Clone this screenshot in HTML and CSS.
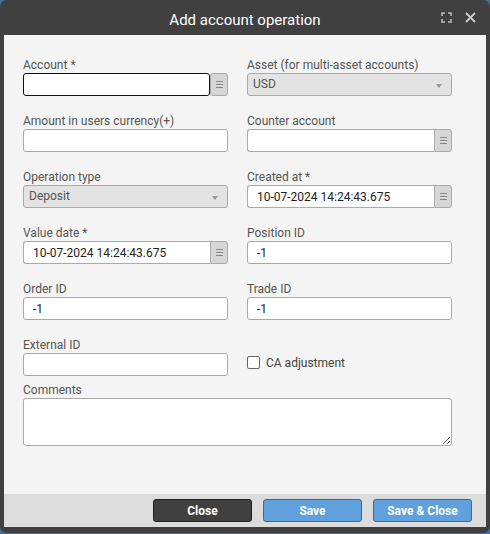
FILE: index.html
```html
<!DOCTYPE html>
<html lang="en">
<head>
    <meta charset="UTF-8">
    <meta name="viewport" content="width=device-width, initial-scale=1.0">
    <title>Add account operation</title>
    <link rel="stylesheet" href="styles.css">
</head>
<body>
    <div class="window">
        <div class="titlebar">
            <span class="title">Add account operation</span>
            <div class="tools">
                <svg width="11" height="11" viewBox="0 0 11 11" fill="none" stroke="#bbb" stroke-width="1.6">
                    <path d="M1 4V1h3M7 1h3v3M10 7v3H7M4 10H1V7"/>
                </svg>
                <svg width="11" height="11" viewBox="0 0 11 11" fill="none" stroke="#ccc" stroke-width="1.8">
                    <path d="M1 1l9 9M10 1l-9 9"/>
                </svg>
            </div>
        </div>
        <div class="content">
            <div class="grid">
                <div class="field">
                    <label>Account *</label>
                    <div class="combo focused">
                        <input type="text" value="">
                        <span class="trigger"><i></i><i></i><i></i></span>
                    </div>
                </div>
                <div class="field">
                    <label>Asset (for multi-asset accounts)</label>
                    <div class="select">USD<span class="arrow"></span></div>
                </div>

                <div class="field">
                    <label>Amount in users currency(+)</label>
                    <input class="text" type="text" value="">
                </div>
                <div class="field">
                    <label>Counter account</label>
                    <div class="combo">
                        <input type="text" value="">
                        <span class="trigger"><i></i><i></i><i></i></span>
                    </div>
                </div>

                <div class="field">
                    <label>Operation type</label>
                    <div class="select">Deposit<span class="arrow"></span></div>
                </div>
                <div class="field">
                    <label>Created at *</label>
                    <div class="combo">
                        <input class="date" type="text" value="10-07-2024 14:24:43.675">
                        <span class="trigger"><i></i><i></i><i></i></span>
                    </div>
                </div>

                <div class="field">
                    <label>Value date *</label>
                    <div class="combo">
                        <input class="date" type="text" value="10-07-2024 14:24:43.675">
                        <span class="trigger"><i></i><i></i><i></i></span>
                    </div>
                </div>
                <div class="field">
                    <label>Position ID</label>
                    <input class="text" type="text" value="-1">
                </div>

                <div class="field">
                    <label>Order ID</label>
                    <input class="text" type="text" value="-1">
                </div>
                <div class="field">
                    <label>Trade ID</label>
                    <input class="text" type="text" value="-1">
                </div>

                <div class="field">
                    <label>External ID</label>
                    <input class="text" type="text" value="">
                </div>
                <div class="field check-field">
                    <span class="checkbox"></span>
                    <span>CA adjustment</span>
                </div>
            </div>
            <div class="comments">
                <label>Comments</label>
                <textarea></textarea>
            </div>
        </div>
        <div class="footer">
            <button class="btn dark">Close</button>
            <button class="btn blue">Save</button>
            <button class="btn blue">Save &amp; Close</button>
        </div>
    </div>
</body>
</html>
```

FILE: styles.css
```css
body{
    margin: 0;
    background-color: #3f6f9c;
    font-family: Roboto, "Liberation Sans", sans-serif;
}
.window{
    width: 490px;
    height: 533px;
    box-sizing: border-box;
    background-color: #404040;
    border-radius: 7px;
    padding: 0 4px 6px 4px;
    display: flex;
    flex-direction: column;
}
.titlebar{
    height: 35px;
    position: relative;
    display: flex;
    align-items: center;
    justify-content: center;
}
.title{
    color: #fff;
    font-size: 15px;
    padding-top: 5px;
}
.tools{
    position: absolute;
    right: 10px;
    top: 12px;
    display: flex;
    gap: 13px;
}
.content{
    flex: 1;
    background-color: #f4f4f4;
    padding: 23px 34px 0 19px;
}
.grid{
    display: grid;
    grid-template-columns: 205px 205px;
    column-gap: 19px;
    row-gap: 18px;
}
.field{
    display: flex;
    flex-direction: column;
}
label{
    display: block;
    font-size: 12px;
    line-height: 15px;
    color: #555;
}
input{
    font-family: Roboto, "Liberation Sans", sans-serif;
    font-size: 12px;
    color: #222;
    outline: none;
}
.text{
    height: 23px;
    box-sizing: border-box;
    border: 1px solid #aaa;
    border-radius: 3px;
    background-color: #fff;
    padding: 0 9px;
}
.combo{
    display: flex;
    height: 23px;
}
.combo input{
    flex: 1;
    min-width: 0;
    box-sizing: border-box;
    border: 1px solid #aaa;
    border-right: none;
    border-radius: 3px 0 0 3px;
    background-color: #fff;
    padding: 0 9px;
}
.combo.focused input{
    border: 1px solid #111;
    border-radius: 3px;
}
.trigger{
    width: 18px;
    box-sizing: border-box;
    border: 1px solid #aaa;
    border-radius: 0 3px 3px 0;
    background-color: #d6d6d6;
    display: flex;
    flex-direction: column;
    align-items: center;
    justify-content: center;
    gap: 2px;
}
.combo.focused .trigger{
    border-radius: 3px;
}
.trigger i{
    display: block;
    width: 7px;
    height: 1px;
    background-color: #888;
}
.select{
    height: 23px;
    box-sizing: border-box;
    border: 1px solid #aaa;
    border-radius: 3px;
    background-color: #e3e3e3;
    color: #555;
    font-size: 12px;
    line-height: 21px;
    padding: 0 5px;
    position: relative;
}
.arrow{
    position: absolute;
    right: 9px;
    top: 10px;
    border-left: 3px solid transparent;
    border-right: 3px solid transparent;
    border-top: 4px solid #999;
}
.check-field{
    flex-direction: row;
    align-items: center;
    gap: 6px;
    padding-top: 11px;
    font-size: 12px;
    color: #444;
}
.checkbox{
    width: 11px;
    height: 11px;
    border: 1px solid #666;
    border-radius: 2px;
    background-color: #fff;
}
.comments{
    margin-top: 7px;
}
textarea{
    display: block;
    width: 429px;
    height: 48px;
    box-sizing: border-box;
    border: 1px solid #aaa;
    border-radius: 3px;
    background-color: #fff;
    resize: both;
    margin: 0;
}
.footer{
    height: 33px;
    background-color: #dcdcdc;
    display: flex;
    justify-content: flex-end;
    align-items: center;
    gap: 11px;
    padding-right: 14px;
}
.btn{
    width: 99px;
    height: 23px;
    border-radius: 3px;
    font-family: Roboto, "Liberation Sans", sans-serif;
    font-weight: bold;
    font-size: 12px;
    color: #fff;
    padding: 0;
}
.dark{
    background-color: #404040;
    border: 1px solid #222;
}
.blue{
    background-color: #60a0dc;
    border: 1px solid #3d6a94;
}
```
